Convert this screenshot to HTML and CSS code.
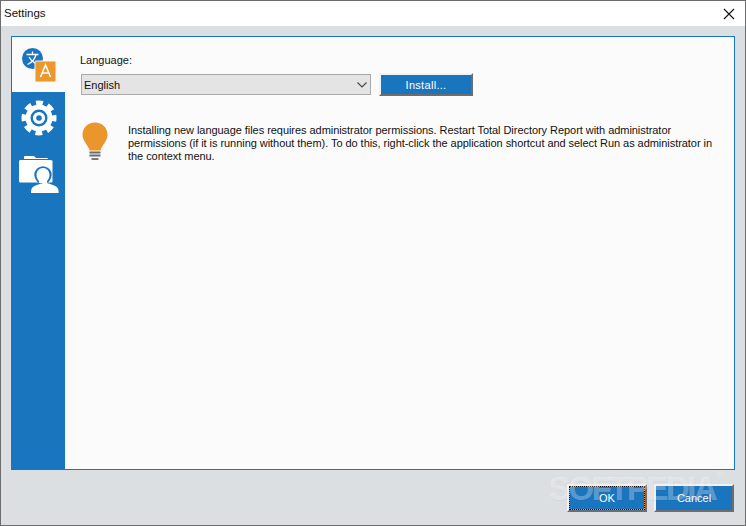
FILE: index.html
```html
<!DOCTYPE html>
<html lang="en">
<head>
<meta charset="utf-8">
<title>Settings</title>
<link rel="stylesheet" href="styles.css">
</head>
<body>
<div class="window">
  <header class="titlebar">
    <span class="title">Settings</span>
    <svg class="close" width="12" height="12" viewBox="0 0 12 12"><path d="M1 1l10 10M11 1L1 11" stroke="#111" stroke-width="1.1" fill="none"/></svg>
  </header>
  <div class="body">
    <main class="panel">
      <nav class="sidebar">
        <div class="tab tab-active">
          <svg width="36" height="36" viewBox="20.500 46.500 36 36">
            <circle cx="32" cy="58" r="10.500" fill="#1a75bf"/>
            <path d="M26 54h12M32 51v3M35.500 54c-1 4.500-4 8-8.500 10M28.500 56.500c1.500 3 3.500 5 7 7" stroke="#fff" stroke-width="1.300" fill="none"/>
            <rect x="34.500" y="60.500" width="21" height="21" rx="1" fill="#ec982d" stroke="#f4f4f4" stroke-width="1"/>
            <path d="M40 76.500l5-12 5 12M41.800 72.500h6.400" stroke="#fff" stroke-width="1.500" fill="none"/>
          </svg>
        </div>
        <div class="tab">
          <svg width="38" height="38" viewBox="19.500 99 38 38">
            <circle cx="38.500" cy="118" r="13.500" fill="#fff"/>
            <circle cx="38.500" cy="118" r="15" fill="none" stroke="#fff" stroke-width="5" stroke-dasharray="6.800 4.980" stroke-dashoffset="3.400"/>
            <circle cx="38.500" cy="118" r="7.300" fill="none" stroke="#1a75bf" stroke-width="2.400"/>
            <circle cx="38.500" cy="118" r="2.800" fill="#1a75bf"/>
          </svg>
        </div>
        <div class="tab tab-last">
          <svg width="42" height="40" viewBox="18 154 42 40">
            <path fill="#fff" d="M24 157q0-1 1-1h9l2 2h11q1 0 1 1H24z"/>
            <path fill="#fff" d="M19 161.500q0-1.500 1.500-1.500H51q1.500 0 1.500 1.500V181q0 1.500-1.500 1.500H20.500q-1.500 0-1.500-1.500z"/>
            <circle cx="43" cy="175" r="8.700" fill="#1a75bf"/>
            <path fill="#1a75bf" d="M29 194v-3c1-3 7-5 11-6.500h6c4 1.500 11 3.500 12 6.500v3z"/>
            <path fill="#fff" d="M43 168c3.800 0 6.500 3 6.500 6.800 0 2.700-1 4.700-2.500 6.200v2c3 1 9.500 2.500 11 5.500.5 1.200.7 3 .7 4.500H31c0-1.500.2-3.300.7-4.500 1.500-3 8.300-4.500 11.300-5.500H39v-2c-1.500-1.500-2.500-3.500-2.500-6.200 0-3.800 2.700-6.800 6.500-6.800z"/>
          </svg>
        </div>
      </nav>
      <section class="content">
        <label class="lang-label">Language:</label>
        <div class="lang-row">
          <div class="select">
            <span>English</span>
            <svg width="10" height="6" viewBox="0 0 10 6"><path d="M.5.500L5 5 9.500.500" stroke="#444" stroke-width="1.100" fill="none"/></svg>
          </div>
          <button class="btn btn-install">Install...</button>
        </div>
        <div class="notice">
          <svg class="bulb" width="26" height="40" viewBox="0 0 26 40">
            <path fill="#ea962c" d="M13 .500C5.800.500.500 6 .500 12.500c0 3.600 1.400 6 3 8.500 1.500 2.400 3.500 5 4 7.500h11c.5-2.500 2.500-5.100 4-7.500 1.600-2.500 3-4.900 3-8.500C25.500 6 20.200.500 13 .500z"/>
            <path d="M7.500 30.500h11M7.500 33.500h11" stroke="#6b6b6b" stroke-width="1.800"/>
            <path d="M9.500 37h7" stroke="#6b6b6b" stroke-width="1.800"/>
          </svg>
          <p class="notice-text">Installing new language files requires administrator permissions. Restart Total Directory Report with administrator permissions (if it is running without them). To do this, right-click the application shortcut and select Run as administrator in the context menu.</p>
        </div>
      </section>
    </main>
    <footer class="actions">
      <button class="btn btn-ok"><span class="focus">OK</span></button>
      <button class="btn btn-cancel">Cancel</button>
    </footer>
  </div>
  <div class="watermark">SOFTPEDIA<sup>®</sup></div>
</div>
</body>
</html>
```
FILE: styles.css
```css
* { box-sizing: border-box; }
html, body { margin: 0; height: 100%; }
body { font-family: "Liberation Sans", Arial, sans-serif; font-size: 11px; color: #111; overflow: hidden; }
.window { position: relative; width: 746px; height: 526px; border: 1px solid #6d6d6d; display: flex; flex-direction: column; background: #dcdfe2; overflow: hidden; }
.titlebar { height: 25px; background: #fff; display: flex; align-items: center; justify-content: space-between; padding: 0 10px 2px 3px; flex: none; }
.title { font-size: 11.500px; }
.close { display: block; margin-top: 2px; }
.body { flex: 1; display: flex; flex-direction: column; padding: 10px 10px 13px 10px; }
.panel { height: 434px; border: 1px solid #1a75bf; background: #fbfbfb; display: flex; flex: none; }
.sidebar { width: 53px; background: #1a75bf; display: flex; flex-direction: column; flex: none; }
.tab { height: 55px; display: flex; align-items: center; justify-content: center; }
.tab-active { background: #fbfbfb; }
.tab + .tab { height: 52px; }
.tab-last { height: 60px !important; }
.content { flex: 1; padding: 16px 15px 0 15px; }
.lang-label { display: block; line-height: 15px; }
.lang-row { display: flex; gap: 9px; margin-top: 5px; margin-left: 1px; align-items: flex-start; }
.select { width: 290px; height: 21px; margin-top: 1px; background: #e4e4e4; border: 1px solid #a9a9a9; display: flex; align-items: center; justify-content: space-between; padding: 0 3px 0 2px; }
.btn { background: #1a75bf; color: #fff; font: inherit; border: 2px solid; border-color: #f2f2f2 #6d6d6d #6d6d6d #f2f2f2; padding: 0; display: flex; align-items: center; justify-content: center; }
.btn-install { width: 94px; height: 23px; margin-left: -1px; letter-spacing: 0.300px; }
.notice { display: flex; gap: 20px; margin-top: 25px; margin-left: 2px; align-items: flex-start; }
.bulb { flex: none; margin-top: 1px; }
.notice-text { margin: 3px 0 0; line-height: 13px; width: 590px; letter-spacing: -0.050px; }
.actions { display: flex; justify-content: flex-end; gap: 7px; margin-top: 14px; margin-right: 1px; }
.actions .btn { width: 80px; height: 28px; }
.focus { display: flex; align-items: center; justify-content: center; width: 100%; height: 100%; border: 1px dotted #000; background: linear-gradient(#1a75bf, #1a75bf) padding-box, linear-gradient(#e8923a, #e8923a) border-box; }
.watermark { position: absolute; left: 548px; top: 468px; font-weight: 700; font-size: 33px; letter-spacing: -2.500px; color: rgba(255, 255, 255, 0.3); text-shadow: 1px 1px 1px rgba(0, 0, 0, 0.03); pointer-events: none; line-height: 40px; }
.watermark sup { font-size: 9px; font-weight: 400; letter-spacing: 0; vertical-align: 22px; line-height: 0; margin-left: 2px; }
```
